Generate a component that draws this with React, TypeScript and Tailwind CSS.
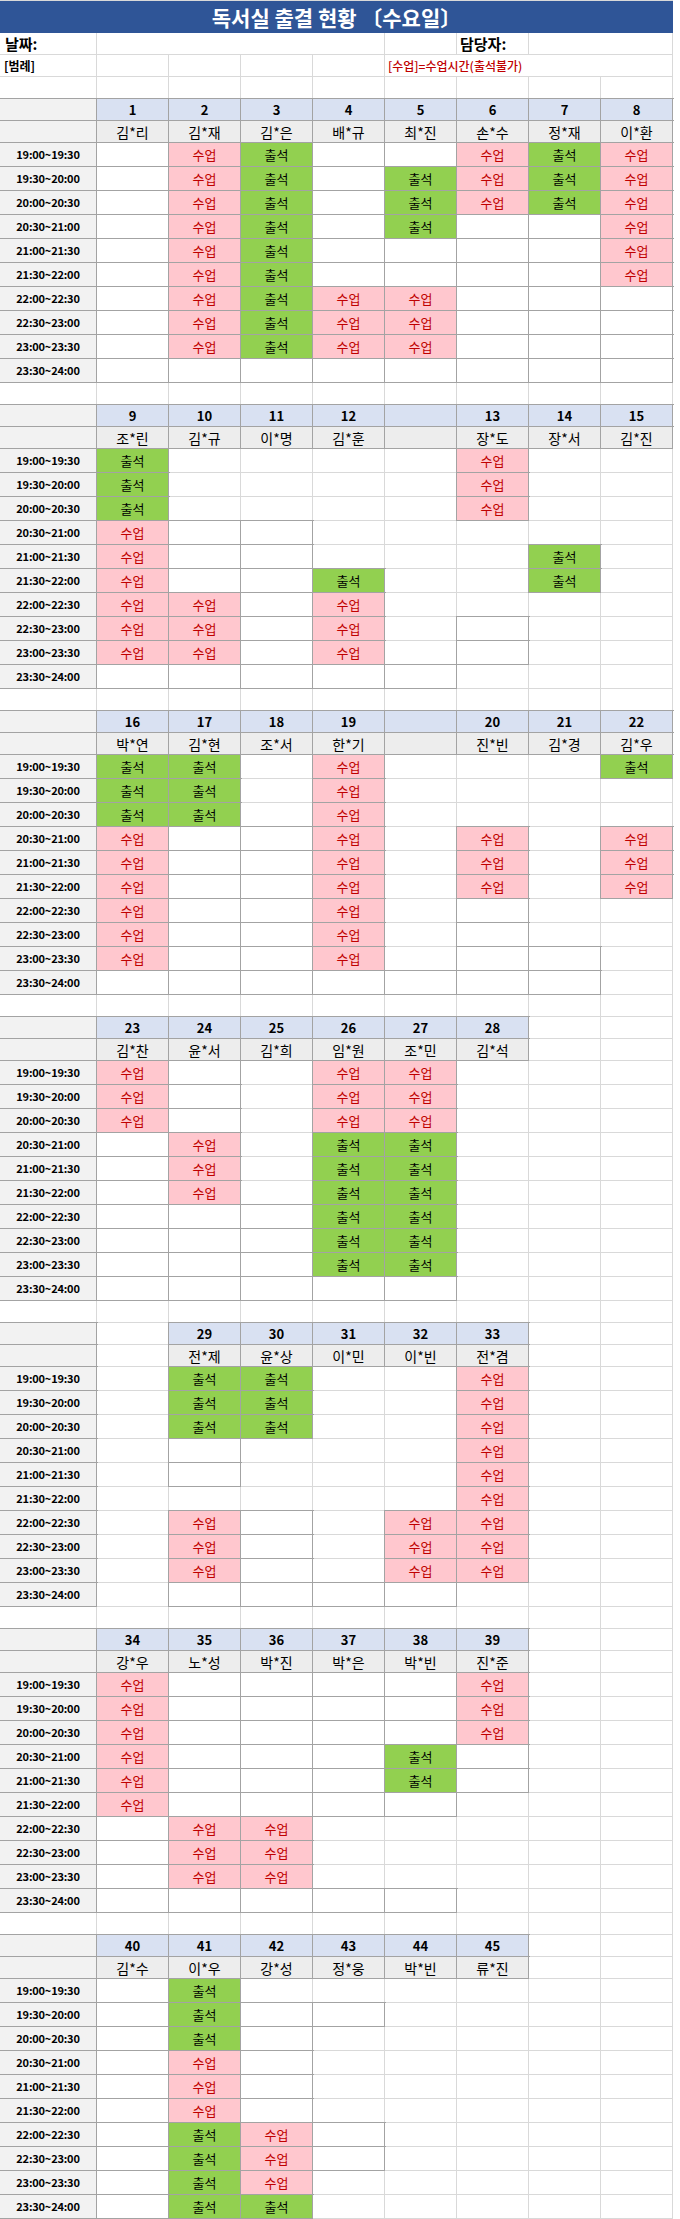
// ─── Reading Room Attendance Sheet ─────────────────────────

const TIMES = [
  '19:00~19:30',
  '19:30~20:00',
  '20:00~20:30',
  '20:30~21:00',
  '21:00~21:30',
  '21:30~22:00',
  '22:00~22:30',
  '22:30~23:00',
  '23:00~23:30',
  '23:30~24:00',
]

// rows: one string per time slot, one char per seat column
// '.' = empty (grid line), 'o' = empty (boxed), 'A' = 출석, 'S' = 수업
type Block = {
  nums: (string | null)[]
  names: string[]
  rows: string[]
}

const BLOCKS: Block[] = [
  {
    nums: ['1', '2', '3', '4', '5', '6', '7', '8'],
    names: ['김*리', '김*재', '김*은', '배*규', '최*진', '손*수', '정*재', '이*환'],
    rows: [
      'oSAooSAS',
      'oSAoASAS',
      'oSAoASAS',
      'oSAoAooS',
      'oSAooooS',
      'oSAooooS',
      'oSASSooo',
      'oSASSooo',
      'oSASSooo',
      'oooooooo',
    ],
  },
  {
    nums: ['9', '10', '11', '12', '', '13', '14', '15'],
    names: ['조*린', '김*규', '이*명', '김*훈', '', '장*도', '장*서', '김*진'],
    rows: [
      'A....S..',
      'A....S..',
      'A....S..',
      'Soo.....',
      'Soo...A.',
      'SooA..A.',
      'SSoS....',
      'SSoS.o..',
      'SSoS.o..',
      'ooooo...',
    ],
  },
  {
    nums: ['16', '17', '18', '19', '', '20', '21', '22'],
    names: ['박*연', '김*현', '조*서', '한*기', '', '진*빈', '김*경', '김*우'],
    rows: [
      'AA.S...A',
      'AA.S....',
      'AA.S....',
      'SooS.S.S',
      'SooS.S.S',
      'SooS.S.S',
      'SooS.o..',
      'SooS.o..',
      'SooS.oo.',
      'ooooooo.',
    ],
  },
  {
    nums: ['23', '24', '25', '26', '27', '28', null, null],
    names: ['김*찬', '윤*서', '김*희', '임*원', '조*민', '김*석', '', ''],
    rows: [
      'So.SS...',
      'So.SS...',
      'So.SS...',
      'oS.AA...',
      'oS.AA...',
      'oS.AA...',
      'oooAA...',
      'oooAA...',
      'oooAA...',
      'ooooo...',
    ],
  },
  {
    nums: [null, '29', '30', '31', '32', '33', null, null],
    names: ['', '전*제', '윤*상', '이*민', '이*빈', '전*겸', '', ''],
    rows: [
      '.AA..S..',
      '.AA..S..',
      '.AA..S..',
      '.o...S..',
      '.o...S..',
      '.....S..',
      '.So.SS..',
      '.So.SS..',
      '.So.SS..',
      '.oooo...',
    ],
  },
  {
    nums: ['34', '35', '36', '37', '38', '39', null, null],
    names: ['강*우', '노*성', '박*진', '박*은', '박*빈', '진*준', '', ''],
    rows: [
      'SooooS..',
      'SooooS..',
      'SooooS..',
      'SoooAo..',
      'SoooAo..',
      'Soooo...',
      'oSS.....',
      'oSS.....',
      'oSS.....',
      'ooooo...',
    ],
  },
  {
    nums: ['40', '41', '42', '43', '44', '45', null, null],
    names: ['김*수', '이*우', '강*성', '정*웅', '박*빈', '류*진', '', ''],
    rows: [
      'oA......',
      'oAoo....',
      'oAo.....',
      'oSo.....',
      'oSo.....',
      'oSo.....',
      'oASo....',
      'oASo....',
      'oAS.....',
      'oAA.....',
    ],
  },
]

const DARK = 'border-r border-b border-[#a3a3a3] shadow-[0_0_0_1px_#a3a3a3]'
const LIGHT = 'border-r border-b border-[#d9d9d9]'
const CELL = 'w-[72px] shrink-0 flex items-center justify-center'

function SeatCell({ mark }: { mark: string }) {
  if (mark === 'A') {
    return <div className={`${CELL} ${DARK} bg-[#92d050] text-[13px] text-black`}>출석</div>
  }
  if (mark === 'S') {
    return <div className={`${CELL} ${DARK} bg-[#ffc7ce] text-[13px] text-[#c00000]`}>수업</div>
  }
  if (mark === 'o') return <div className={`${CELL} ${DARK} bg-white`} />
  return <div className={`${CELL} ${LIGHT} bg-white`} />
}

function Filler() {
  return <div className="flex-1 bg-white" />
}

function SheetBlock({ block, last }: { block: Block; last: boolean }) {
  return (
    <>
      {/* Seat numbers */}
      <div className="flex h-[22px]">
        <div className={`w-[97px] shrink-0 ${DARK} bg-[#f2f2f2]`} />
        {block.nums.map((n, i) =>
          n === null ? (
            <div key={i} className={`${CELL} ${LIGHT} bg-white`} />
          ) : (
            <div key={i} className={`${CELL} ${DARK} bg-[#d9e1f2] text-[13px] font-bold`}>
              {n}
            </div>
          )
        )}
        <Filler />
      </div>

      {/* Student names */}
      <div className="flex h-[22px]">
        <div className={`w-[97px] shrink-0 ${DARK} bg-[#f2f2f2]`} />
        {block.names.map((name, i) =>
          block.nums[i] === null ? (
            <div key={i} className={`${CELL} ${LIGHT} bg-white`} />
          ) : (
            <div key={i} className={`${CELL} ${DARK} bg-[#ededed] text-[14px]`}>
              {name}
            </div>
          )
        )}
        <Filler />
      </div>

      {/* Time slots */}
      {block.rows.map((row, r) => (
        <div key={r} className="flex h-[24px]">
          <div
            className={`w-[97px] shrink-0 flex items-center justify-center ${DARK} bg-[#f2f2f2] text-[11px] font-bold tracking-[-0.2px]`}
          >
            {TIMES[r]}
          </div>
          {row.split('').map((m, c) => (
            <SeatCell key={c} mark={m} />
          ))}
          <Filler />
        </div>
      ))}

      {/* Spacer */}
      {!last && (
        <div className="flex h-[22px]">
          <div className={`w-[97px] shrink-0 ${LIGHT} bg-white`} />
          {Array.from({ length: 8 }).map((_, i) => (
            <div key={i} className={`${CELL} ${LIGHT} bg-white`} />
          ))}
          <Filler />
        </div>
      )}
    </>
  )
}

export default function App() {
  return (
    <div className="w-[680px] bg-white text-black font-['Noto_Sans_CJK_KR','Noto_Sans',sans-serif] leading-none">
      {/* Title */}
      <div className="flex">
        <div className="w-[673px] h-[33px] border-t border-[#d9d9d9] bg-[#2f5597] flex items-center justify-center text-white text-[21px] font-bold">
          독서실 출결 현황 〔수요일〕
        </div>
        <Filler />
      </div>

      {/* Date / manager */}
      <div className="flex h-[22px]">
        <div className={`w-[97px] shrink-0 ${LIGHT} flex items-center pl-[5px] text-[15px] font-bold`}>
          날짜:
        </div>
        <div className={`w-[288px] shrink-0 ${LIGHT}`} />
        <div className={`w-[72px] shrink-0 ${LIGHT}`} />
        <div className={`w-[72px] shrink-0 ${LIGHT} flex items-center pl-[3px] text-[15px] font-bold`}>
          담당자:
        </div>
        <div className={`w-[144px] shrink-0 ${LIGHT}`} />
        <Filler />
      </div>

      {/* Legend */}
      <div className="flex h-[22px]">
        <div className={`w-[97px] shrink-0 ${LIGHT} flex items-center pl-[4px] text-[12px] font-bold`}>
          [범례]
        </div>
        {Array.from({ length: 4 }).map((_, i) => (
          <div key={i} className={`${CELL} ${LIGHT}`} />
        ))}
        <div className={`w-[288px] shrink-0 ${LIGHT} flex items-center pl-[3px] text-[12px] font-medium text-[#c00000]`}>
          [수업]=수업시간(출석불가)
        </div>
        <Filler />
      </div>

      {/* Empty row */}
      <div className="flex h-[22px]">
        <div className={`w-[97px] shrink-0 ${LIGHT}`} />
        {Array.from({ length: 8 }).map((_, i) => (
          <div key={i} className={`${CELL} ${LIGHT}`} />
        ))}
        <Filler />
      </div>

      {BLOCKS.map((b, i) => (
        <SheetBlock key={i} block={b} last={i === BLOCKS.length - 1} />
      ))}
    </div>
  )
}
